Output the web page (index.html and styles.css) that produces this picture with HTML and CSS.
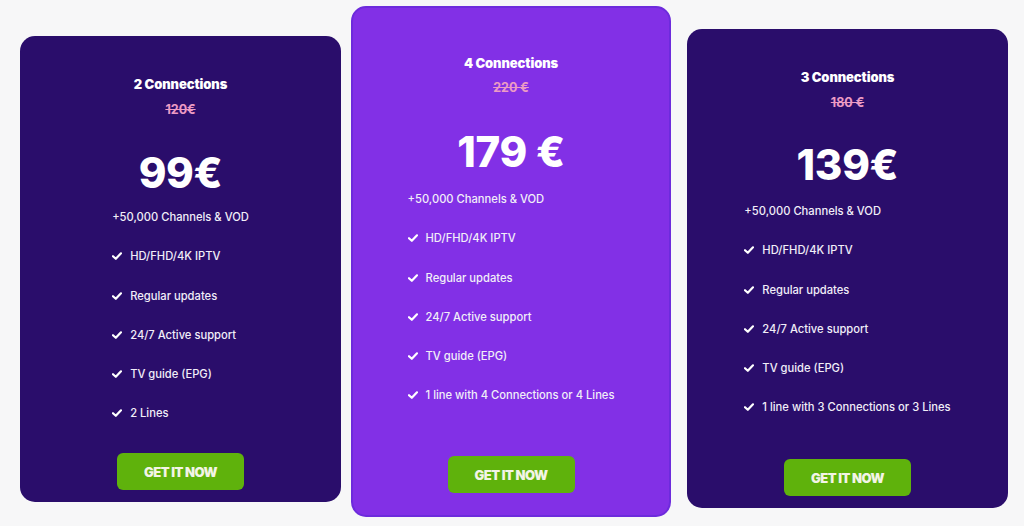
FILE: index.html
```html
<!DOCTYPE html>
<html lang="en">
<head>
<meta charset="utf-8">
<title>Pricing</title>
<link rel="stylesheet" href="styles.css">
</head>
<body>
<main class="plans">
  <section class="card card-a">
    <h3 class="title">2 Connections</h3>
    <div class="old">120€</div>
    <div class="price">99€</div>
    <ul class="features">
      <li class="plain">+50,000 Channels &amp; VOD</li>
      <li><svg class="chk" viewBox="0 0 10 8"><path d="M1 4.2 L3.8 6.8 L9 1.3"/></svg>HD/FHD/4K IPTV</li>
      <li><svg class="chk" viewBox="0 0 10 8"><path d="M1 4.2 L3.8 6.8 L9 1.3"/></svg>Regular updates</li>
      <li><svg class="chk" viewBox="0 0 10 8"><path d="M1 4.2 L3.8 6.8 L9 1.3"/></svg>24/7 Active support</li>
      <li><svg class="chk" viewBox="0 0 10 8"><path d="M1 4.2 L3.8 6.8 L9 1.3"/></svg>TV guide (EPG)</li>
      <li><svg class="chk" viewBox="0 0 10 8"><path d="M1 4.2 L3.8 6.8 L9 1.3"/></svg>2 Lines</li>
    </ul>
    <a class="btn" href="#">GET IT NOW</a>
  </section>
  <section class="card card-b">
    <h3 class="title">4 Connections</h3>
    <div class="old">220 €</div>
    <div class="price">179 €</div>
    <ul class="features">
      <li class="plain">+50,000 Channels &amp; VOD</li>
      <li><svg class="chk" viewBox="0 0 10 8"><path d="M1 4.2 L3.8 6.8 L9 1.3"/></svg>HD/FHD/4K IPTV</li>
      <li><svg class="chk" viewBox="0 0 10 8"><path d="M1 4.2 L3.8 6.8 L9 1.3"/></svg>Regular updates</li>
      <li><svg class="chk" viewBox="0 0 10 8"><path d="M1 4.2 L3.8 6.8 L9 1.3"/></svg>24/7 Active support</li>
      <li><svg class="chk" viewBox="0 0 10 8"><path d="M1 4.2 L3.8 6.8 L9 1.3"/></svg>TV guide (EPG)</li>
      <li><svg class="chk" viewBox="0 0 10 8"><path d="M1 4.2 L3.8 6.8 L9 1.3"/></svg>1 line with 4 Connections or 4 Lines</li>
    </ul>
    <a class="btn" href="#">GET IT NOW</a>
  </section>
  <section class="card card-c">
    <h3 class="title">3 Connections</h3>
    <div class="old">180 €</div>
    <div class="price">139€</div>
    <ul class="features">
      <li class="plain">+50,000 Channels &amp; VOD</li>
      <li><svg class="chk" viewBox="0 0 10 8"><path d="M1 4.2 L3.8 6.8 L9 1.3"/></svg>HD/FHD/4K IPTV</li>
      <li><svg class="chk" viewBox="0 0 10 8"><path d="M1 4.2 L3.8 6.8 L9 1.3"/></svg>Regular updates</li>
      <li><svg class="chk" viewBox="0 0 10 8"><path d="M1 4.2 L3.8 6.8 L9 1.3"/></svg>24/7 Active support</li>
      <li><svg class="chk" viewBox="0 0 10 8"><path d="M1 4.2 L3.8 6.8 L9 1.3"/></svg>TV guide (EPG)</li>
      <li><svg class="chk" viewBox="0 0 10 8"><path d="M1 4.2 L3.8 6.8 L9 1.3"/></svg>1 line with 3 Connections or 3 Lines</li>
    </ul>
    <a class="btn" href="#">GET IT NOW</a>
  </section>
</main>
</body>
</html>
```

FILE: styles.css
```css
* { box-sizing: border-box; }
html, body {
  margin: 0;
  padding: 0;
  background: #f7f7f8;
  font-family: Inter, "Noto Sans", "Liberation Sans", sans-serif;
}
.plans {
  display: flex;
  align-items: flex-start;
  padding-left: 20px;
  height: 526px;
  overflow: hidden;
}
.card {
  display: flex;
  flex-direction: column;
  align-items: center;
  border-radius: 15px;
  background: #2a0d6b;
  color: #fff;
}
.card-a { width: 321px; height: 466px; margin-top: 36px; padding: 40px 0 12px; }
.card-b {
  width: 320px; height: 511px; margin-top: 6px; margin-left: 10px;
  padding: 49px 0 22px;
  background: #8230e6;
  border: 2px solid #6d2bdc;
}
.card-c { width: 321px; height: 479px; margin-top: 29px; margin-left: 16px; padding: 40px 0 12px; }

.title {
  margin: 0;
  font-size: 13px;
  line-height: 16px;
  font-weight: 900;
  letter-spacing: -0.1px;
}
.card-b .title { margin-top: -2px; }
.old {
  margin-top: 10px;
  font-size: 12.5px;
  line-height: 16px;
  font-weight: 700;
  color: #ec9bc4;
  text-decoration: line-through;
}
.card-b .old { margin-top: 9px; }
.price {
  margin-top: 31px;
  font-size: 42px;
  line-height: 48px;
  font-weight: 800;
  letter-spacing: -0.3px;
}
.card-b .price { margin-top: 32px; }
.card-c .price { margin-top: 30px; }
.features {
  list-style: none;
  margin: 12px 0 0;
  padding: 0;
  display: flex;
  flex-direction: column;
  gap: 23.25px;
  font-size: 11.2px;
  line-height: 16px;
  font-weight: 500;
  color: #f1eef8;
}
.card-b .features { margin-top: 15px; }
.card-c .features { margin-top: 14px; }
.features li {
  display: flex;
  align-items: center;
  white-space: nowrap;
}
.chk {
  width: 10px;
  height: 8px;
  margin-right: 8px;
  fill: none;
  stroke: #fff;
  stroke-width: 2.2;
  stroke-linecap: round;
  stroke-linejoin: round;
}
.btn {
  margin-top: auto;
  width: 127px;
  height: 37px;
  display: flex;
  align-items: center;
  justify-content: center;
  background: #5fb20c;
  border-radius: 6px;
  color: #f3f4e6;
  text-decoration: none;
  font-size: 13px;
  font-weight: 900;
  letter-spacing: -0.5px;
}
```
